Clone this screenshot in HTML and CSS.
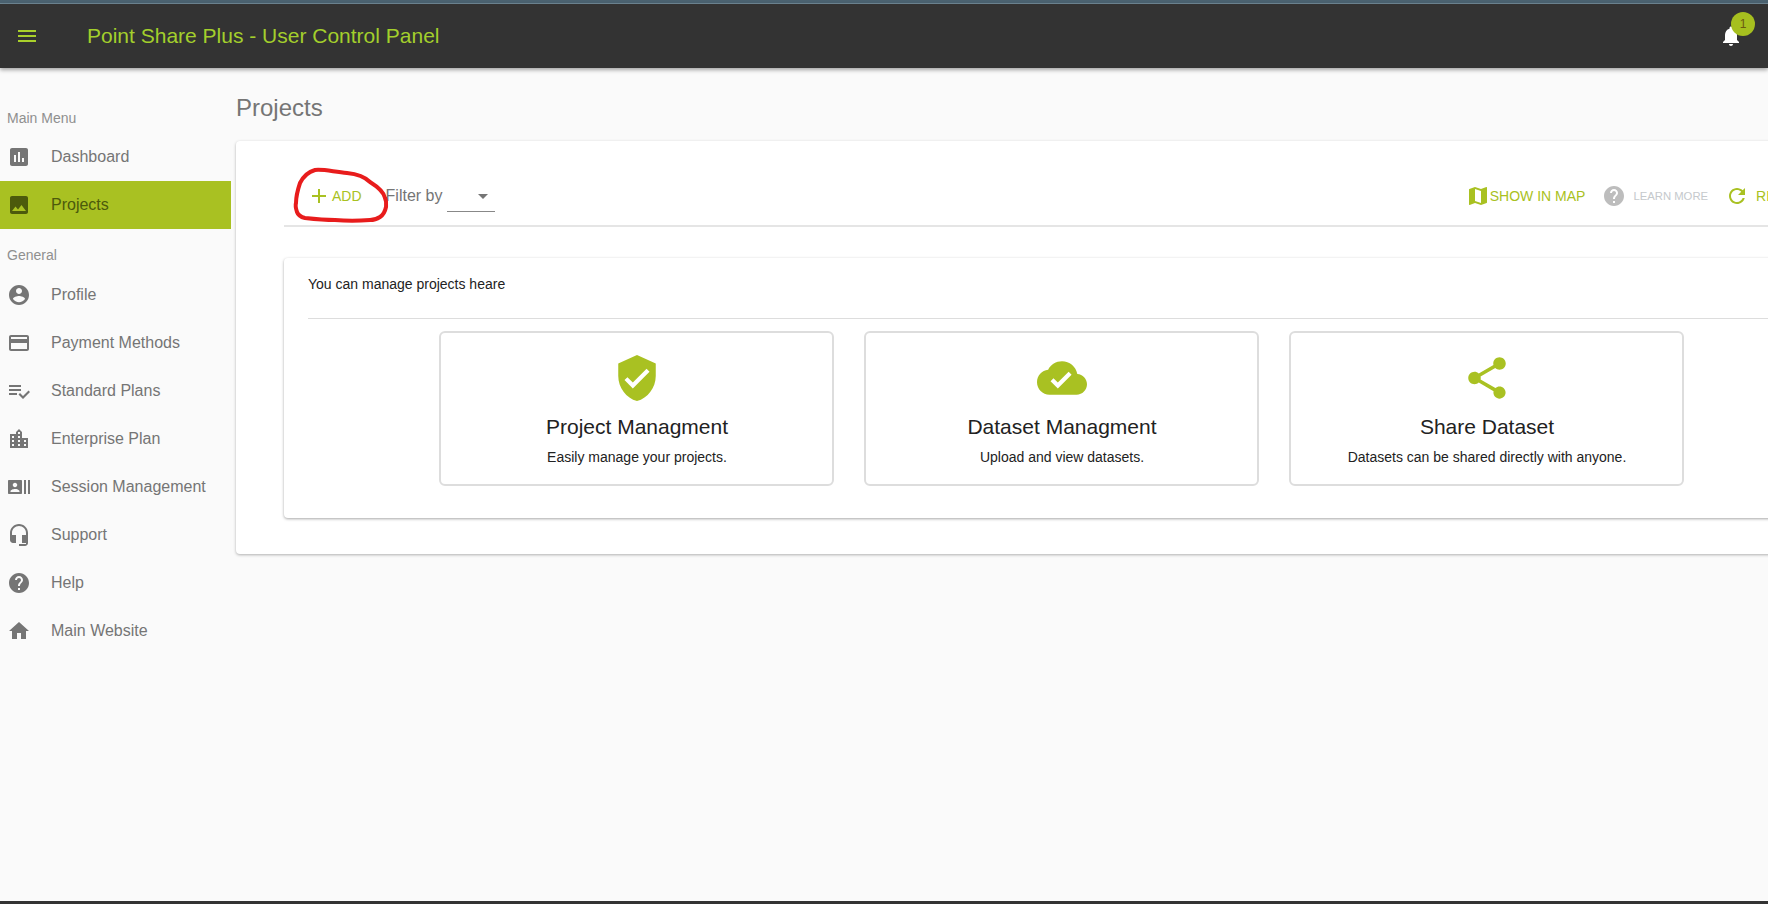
FILE: index.html
```html
<!DOCTYPE html>
<html lang="en">
<head>
<meta charset="utf-8">
<title>Point Share Plus - User Control Panel</title>
<link rel="stylesheet" href="styles.css">
</head>
<body>
<div class="strip"></div>
<header class="topbar">
  <svg class="ic menu-ic" viewBox="0 0 24 24"><path d="M3 18h18v-2H3v2zm0-5h18v-2H3v2zm0-7v2h18V6H3z"/></svg>
  <h1 class="brand">Point Share Plus - User Control Panel</h1>
  <div class="bell">
    <svg class="ic bell-ic" viewBox="0 0 24 24"><path d="M12 22c1.1 0 2-.9 2-2h-4c0 1.1.89 2 2 2zm6-6v-5c0-3.07-1.64-5.64-4.5-6.32V4c0-.83-.67-1.5-1.5-1.5s-1.5.67-1.5 1.5v.68C7.63 5.36 6 7.92 6 11v5l-2 2v1h16v-1l-2-2z"/></svg>
    <span class="badge">1</span>
  </div>
</header>
<div class="shell">
  <nav class="side">
    <div class="side-label">Main Menu</div>
    <a class="item"><svg class="ic" viewBox="0 0 24 24"><path d="M19 3H5c-1.1 0-2 .9-2 2v14c0 1.1.9 2 2 2h14c1.1 0 2-.9 2-2V5c0-1.1-.9-2-2-2zM9 17H7v-7h2v7zm4 0h-2V7h2v10zm4 0h-2v-4h2v4z"/></svg><span>Dashboard</span></a>
    <a class="item active"><svg class="ic" viewBox="0 0 24 24"><path d="M21 19V5c0-1.1-.9-2-2-2H5c-1.1 0-2 .9-2 2v14c0 1.1.9 2 2 2h14c1.1 0 2-.9 2-2zM8.5 13.5l2.5 3.01L14.5 12l4.5 6H5l3.5-4.5z"/></svg><span>Projects</span></a>
    <div class="side-label second">General</div>
    <a class="item"><svg class="ic" viewBox="0 0 24 24"><path d="M12 2C6.48 2 2 6.48 2 12s4.48 10 10 10 10-4.48 10-10S17.52 2 12 2zm0 3c1.66 0 3 1.34 3 3s-1.34 3-3 3-3-1.34-3-3 1.34-3 3-3zm0 14.2c-2.5 0-4.71-1.28-6-3.22.03-1.99 4-3.08 6-3.08 1.99 0 5.97 1.09 6 3.08-1.29 1.94-3.5 3.22-6 3.22z"/></svg><span>Profile</span></a>
    <a class="item"><svg class="ic" viewBox="0 0 24 24"><path d="M20 4H4c-1.11 0-1.99.89-1.99 2L2 18c0 1.11.89 2 2 2h16c1.11 0 2-.89 2-2V6c0-1.11-.89-2-2-2zm0 14H4v-6h16v6zm0-10H4V6h16v2z"/></svg><span>Payment Methods</span></a>
    <a class="item"><svg class="ic" viewBox="0 0 24 24"><path d="M14 10H2v2h12v-2zm0-4H2v2h12V6zM2 16h8v-2H2v2zm19.5-4.5L23 13l-6.99 7-4.51-4.5L13 14l3.01 3 5.49-5.5z"/></svg><span>Standard Plans</span></a>
    <a class="item"><svg class="ic" viewBox="0 0 24 24"><path d="M15 11V5l-3-3-3 3v2H3v14h18V11h-6zm-8 8H5v-2h2v2zm0-4H5v-2h2v2zm0-4H5V9h2v2zm6 8h-2v-2h2v2zm0-4h-2v-2h2v2zm0-4h-2V9h2v2zm0-4h-2V5h2v2zm6 12h-2v-2h2v2zm0-4h-2v-2h2v2z"/></svg><span>Enterprise Plan</span></a>
    <a class="item"><svg class="ic" viewBox="0 0 24 24"><path d="M21 5v14h2V5h-2zm-4 14h2V5h-2v14zM14 5H2c-.55 0-1 .45-1 1v12c0 .55.45 1 1 1h12c.55 0 1-.45 1-1V6c0-.55-.45-1-1-1zM8 7.75c1.24 0 2.25 1.01 2.25 2.25S9.24 12.25 8 12.25 5.75 11.24 5.75 10 6.76 7.75 8 7.75zM12.5 17h-9v-.75c0-1.5 3-2.25 4.5-2.25s4.5.75 4.5 2.25V17z"/></svg><span>Session Management</span></a>
    <a class="item"><svg class="ic" viewBox="0 0 24 24"><path d="M12 1c-4.97 0-9 4.03-9 9v7c0 1.66 1.34 3 3 3h3v-8H5v-2c0-3.87 3.13-7 7-7s7 3.13 7 7v2h-4v8h4v1h-7v2h6c1.66 0 3-1.34 3-3V10c0-4.97-4.03-9-9-9z"/></svg><span>Support</span></a>
    <a class="item"><svg class="ic" viewBox="0 0 24 24"><path d="M12 2C6.48 2 2 6.48 2 12s4.48 10 10 10 10-4.48 10-10S17.52 2 12 2zm1 17h-2v-2h2v2zm2.07-7.75l-.9.92C13.45 12.9 13 13.5 13 15h-2v-.5c0-1.1.45-2.1 1.17-2.83l1.24-1.26c.37-.36.59-.86.59-1.41 0-1.1-.9-2-2-2s-2 .9-2 2H8c0-2.21 1.79-4 4-4s4 1.79 4 4c0 .88-.36 1.68-.93 2.25z"/></svg><span>Help</span></a>
    <a class="item"><svg class="ic" viewBox="0 0 24 24"><path d="M10 20v-6h4v6h5v-8h3L12 3 2 12h3v8z"/></svg><span>Main Website</span></a>
  </nav>
  <main class="main">
    <h2 class="page-title">Projects</h2>
    <section class="panel">
      <div class="toolbar">
        <div class="tool-left">
          <button class="btn add"><svg class="ic" viewBox="0 0 24 24"><path d="M19 13h-6v6h-2v-6H5v-2h6V5h2v6h6v2z"/></svg>ADD</button>
          <span class="filter-label">Filter by</span>
          <span class="select"><svg class="caret" viewBox="0 0 24 24"><path d="M7 10l5 5 5-5z"/></svg></span>
        </div>
        <div class="tool-right">
          <button class="btn map"><svg class="ic" viewBox="0 0 24 24"><path d="M20.5 3l-.16.03L15 5.1 9 3 3.36 4.9c-.21.07-.36.25-.36.48V20.5c0 .28.22.5.5.5l.16-.03L9 18.9l6 2.1 5.64-1.9c.21-.07.36-.25.36-.48V3.5c0-.28-.22-.5-.5-.5zM15 19l-6-2.11V5l6 2.11V19z"/></svg>SHOW IN MAP</button>
          <button class="btn learn"><svg class="ic" viewBox="0 0 24 24"><path d="M12 2C6.48 2 2 6.48 2 12s4.48 10 10 10 10-4.48 10-10S17.52 2 12 2zm1 17h-2v-2h2v2zm2.07-7.75l-.9.92C13.45 12.9 13 13.5 13 15h-2v-.5c0-1.1.45-2.1 1.17-2.83l1.24-1.26c.37-.36.59-.86.59-1.41 0-1.1-.9-2-2-2s-2 .9-2 2H8c0-2.21 1.79-4 4-4s4 1.79 4 4c0 .88-.36 1.68-.93 2.25z"/></svg><span>LEARN MORE</span></button>
          <button class="btn refresh"><svg class="ic" viewBox="0 0 24 24"><path d="M17.65 6.35C16.2 4.9 14.21 4 12 4c-4.42 0-7.99 3.58-7.99 8s3.57 8 7.99 8c3.73 0 6.84-2.55 7.73-6h-2.08c-.82 2.33-3.04 4-5.65 4-3.31 0-6-2.69-6-6s2.69-6 6-6c1.66 0 3.14.69 4.22 1.78L13 11h7V4l-2.35 2.35z"/></svg>REFRESH</button>
        </div>
      </div>
      <div class="inner">
        <p class="intro">You can manage projects heare</p>
        <div class="rule"></div>
        <div class="features">
          <article class="feature">
            <svg class="ic feat-ic" viewBox="0 0 24 24"><path d="M12 1L3 5v6c0 5.55 3.84 10.74 9 12 5.16-1.26 9-6.45 9-12V5l-9-4zm-2 16l-4-4 1.41-1.41L10 14.17l6.59-6.59L18 9l-8 8z"/></svg>
            <h3>Project Managment</h3>
            <p>Easily manage your projects.</p>
          </article>
          <article class="feature">
            <svg class="ic feat-ic" viewBox="0 0 24 24"><path d="M19.35 10.04C18.67 6.59 15.64 4 12 4 9.11 4 6.6 5.64 5.35 8.04 2.34 8.36 0 10.91 0 14c0 3.31 2.69 6 6 6h13c2.76 0 5-2.24 5-5 0-2.64-2.05-4.78-4.65-4.96zM10 17l-3.5-3.5 1.41-1.41L10 14.17 15.18 9l1.41 1.41L10 17z"/></svg>
            <h3>Dataset Managment</h3>
            <p>Upload and view datasets.</p>
          </article>
          <article class="feature">
            <svg class="ic feat-ic" viewBox="0 0 24 24"><path d="M18 16.08c-.76 0-1.44.3-1.96.77L8.91 12.7c.05-.23.09-.46.09-.7s-.04-.47-.09-.7l7.05-4.11c.54.5 1.25.81 2.04.81 1.66 0 3-1.34 3-3s-1.34-3-3-3-3 1.34-3 3c0 .24.04.47.09.7L8.04 9.81C7.5 9.31 6.79 9 6 9c-1.66 0-3 1.34-3 3s1.34 3 3 3c.79 0 1.5-.31 2.04-.81l7.12 4.16c-.05.21-.08.43-.08.65 0 1.61 1.31 2.92 2.92 2.92 1.61 0 2.92-1.31 2.92-2.92s-1.31-2.92-2.92-2.92z"/></svg>
            <h3>Share Dataset</h3>
            <p>Datasets can be shared directly with anyone.</p>
          </article>
        </div>
      </div>
    </section>
  </main>
</div>
<div class="bottom"></div>
<svg class="scribble" viewBox="0 0 120 80"><path d="M27 4C36 3 46 6 59 7C69 8 77 11 82 16C90 21 96 26 97 32C99 36 98 40 98 41C97 46 95 49 92 51C89 53 86 54 82 54C70 55 58 55 47 54C36 54 26 53 17 52C13 51 10 49 9 46C8 43 7 40 8 37C8 30 10 23 12 17C15 11 20 6 27 4Z"/></svg>
</body>
</html>
```
FILE: styles.css
```css
* { box-sizing: border-box; }
html, body { margin: 0; height: 100%; }
body {
  display: flex;
  flex-direction: column;
  height: 100vh;
  overflow: hidden;
  background: #fafafa;
  font-family: "Liberation Sans", Arial, sans-serif;
  position: relative;
}
.ic { display: block; width: 24px; height: 24px; fill: currentColor; flex: none; }
.strip { height: 4px; background: #4b6270; border-bottom: 1px solid #6f8794; flex: none; }
.topbar {
  height: 64px;
  flex: none;
  background: #333;
  display: flex;
  align-items: center;
  padding: 0 0 0 15px;
  box-shadow: 0 2px 4px rgba(0,0,0,.35);
  position: relative;
  z-index: 2;
}
.menu-ic { color: #a9d02b; }
.brand { margin: 0 0 0 48px; font-size: 21px; font-weight: 400; color: #a3cf2c; }
.bell { margin-left: auto; margin-right: 25px; position: relative; color: #fff; }
.badge {
  position: absolute;
  top: -12px;
  left: 12px;
  width: 24px;
  height: 24px;
  border-radius: 50%;
  background: #a6bf1f;
  color: #6b5a10;
  font-size: 12px;
  display: flex;
  align-items: center;
  justify-content: center;
}
.shell { flex: 1; display: flex; min-height: 0; }
.side { width: 231px; flex: none; padding-top: 38px; }
.side-label { font-size: 14px; color: #8f8f8f; padding-left: 7px; height: 27px; line-height: 24px; }
.side-label.second { margin-top: 14px; height: 28px; line-height: 24px; }
.item { display: flex; align-items: center; height: 48px; padding-left: 7px; color: #757575; font-size: 16px; }
.item span { margin-left: 20px; }
.item.active { background: #a9c122; color: #4c5a0c; }
.main { flex: 1; min-width: 0; padding-left: 5px; overflow: hidden; }
.page-title { margin: 25px 0 0; height: 48px; line-height: 30px; font-size: 24px; font-weight: 400; color: #757575; }
.panel {
  width: 1650px;
  height: 413px;
  padding: 0 48px;
  background: #fff;
  border-radius: 4px;
  box-shadow: 0 1px 3px rgba(0,0,0,.3);
}
.toolbar {
  height: 86px;
  display: flex;
  justify-content: space-between;
  align-items: flex-end;
  padding: 0 15px 7px 23px;
  border-bottom: 2px solid #e5e5e5;
}
.tool-left, .tool-right { display: flex; align-items: center; height: 44px; }
.btn { display: flex; align-items: center; border: 0; background: none; padding: 0; font: inherit; font-size: 14px; color: #a9c122; }
.add .ic { width: 24px; height: 24px; margin-right: 1px; }
.filter-label { margin-left: 24px; font-size: 16px; color: #757575; }
.select { width: 48px; height: 32px; margin-left: 5px; border-bottom: 1px solid #888; display: flex; justify-content: flex-end; align-items: center; }
.caret { width: 24px; height: 24px; fill: #757575; }
.learn { margin-left: 17px; color: #bdbdbd; }
.learn span { font-size: 11.3px; color: #c5c9cc; margin-left: 7px; }
.refresh { margin-left: 17px; }
.refresh .ic { margin-right: 7px; }
.inner {
  margin-top: 31px;
  height: 260px;
  padding: 0 24px;
  background: #fff;
  border-radius: 4px;
  box-shadow: 0 1px 3px rgba(0,0,0,.35);
}
.intro { margin: 0; padding-top: 18px; height: 60px; font-size: 14px; line-height: 16px; color: #222; }
.rule { border-top: 1px solid #ddd; }
.features { display: flex; justify-content: center; gap: 30px; margin-top: 12px; }
.feature {
  width: 395px;
  height: 155px;
  border: 2px solid #ddd;
  border-radius: 6px;
  text-align: center;
  padding: 20px 0 0 2px;
}
.feat-ic { width: 50px; height: 50px; margin: 0 auto; color: #a9c122; }
.feature h3 { margin: 12px 0 0; font-size: 21px; line-height: 24px; font-weight: 400; color: #222; }
.feature p { margin: 10px 0 0; font-size: 14px; line-height: 16px; color: #222; }
.bottom { height: 3px; flex: none; background: #333; }
.scribble {
  position: absolute;
  left: 288px;
  top: 166px;
  width: 120px;
  height: 80px;
  fill: none;
  stroke: #e81c1c;
  stroke-width: 4;
  stroke-linecap: round;
}
```
